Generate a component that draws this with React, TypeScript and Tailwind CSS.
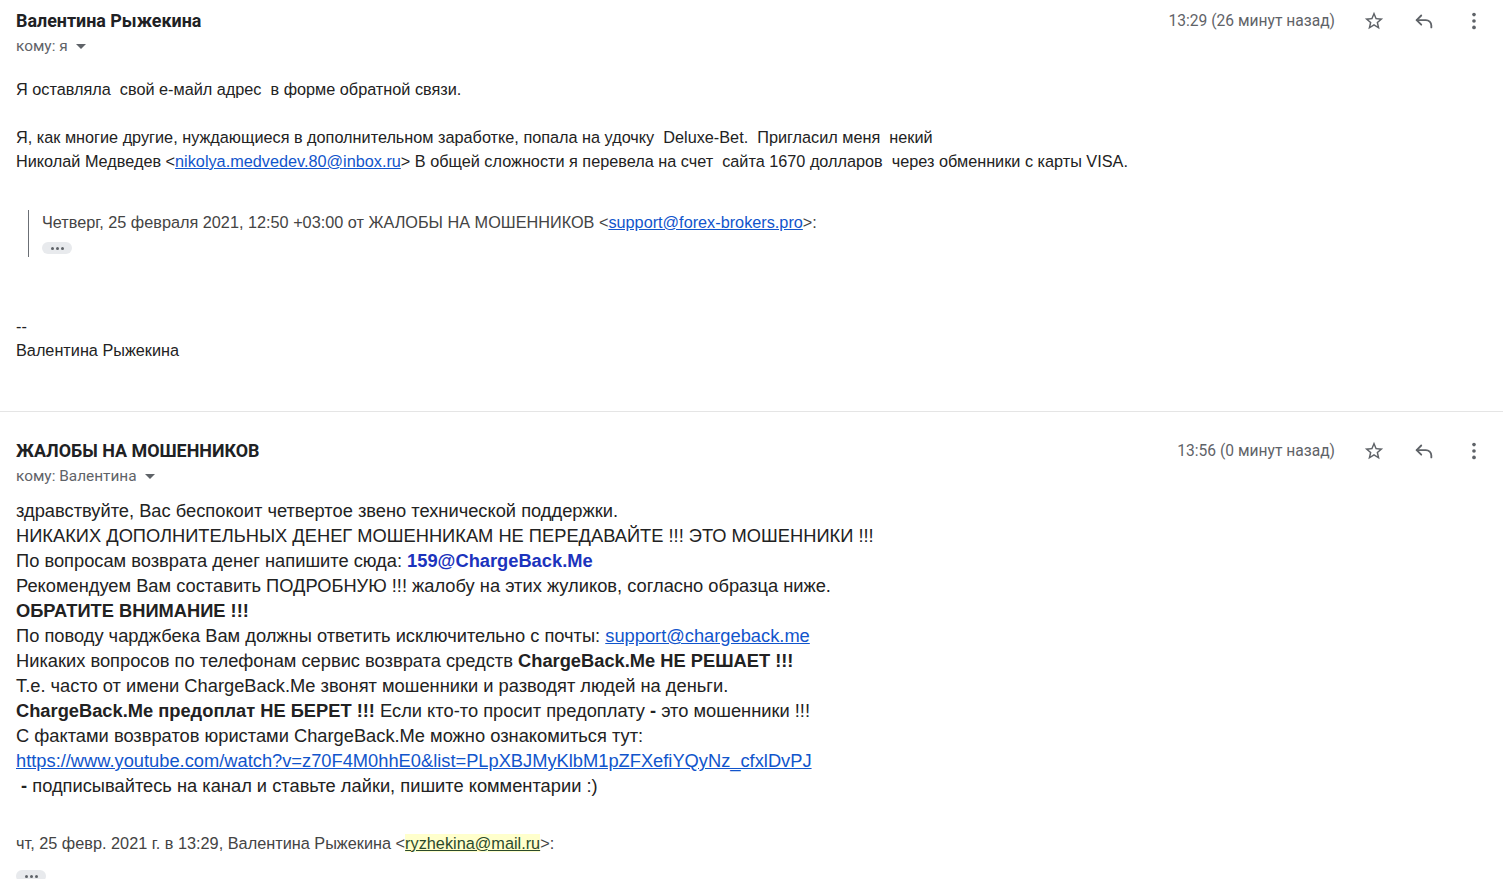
import React from 'react'

const StarIcon = () => (
  <svg width="22" height="22" viewBox="0 0 24 24" fill="#5f6368">
    <path d="M22 9.24l-7.19-.62L12 2 9.19 8.63 2 9.24l5.46 4.73L5.82 21 12 17.27 18.18 21l-1.63-7.03L22 9.24zM12 15.4l-3.76 2.27 1-4.28-3.32-2.88 4.38-.38L12 6.1l1.71 4.04 4.38.38-3.32 2.88 1 4.28L12 15.4z" />
  </svg>
)

const ReplyIcon = () => (
  <svg width="22" height="22" viewBox="0 0 24 24" fill="none" stroke="#5f6368" strokeWidth="2" strokeLinecap="round" strokeLinejoin="round">
    <path d="M9 6L4 11l5 5" />
    <path d="M4 11h10a6 6 0 0 1 6 6v2" />
  </svg>
)

const MoreIcon = () => (
  <svg width="22" height="22" viewBox="0 0 24 24" fill="#5f6368">
    <circle cx="12" cy="5" r="2" />
    <circle cx="12" cy="12" r="2" />
    <circle cx="12" cy="19" r="2" />
  </svg>
)

const Caret = () => (
  <svg width="10" height="6" viewBox="0 0 10 6" fill="#5f6368" className="ml-[8px] mt-[1px]">
    <path d="M0 0h10L5 5z" />
  </svg>
)

const Ellipsis = () => (
  <div className="flex items-center justify-center gap-[2px] w-[30px] h-[12px] rounded-full bg-[#e8eaed]">
    <span className="w-[3px] h-[3px] rounded-full bg-[#5f6368]" />
    <span className="w-[3px] h-[3px] rounded-full bg-[#5f6368]" />
    <span className="w-[3px] h-[3px] rounded-full bg-[#5f6368]" />
  </div>
)

function Header({ name, to, time }: { name: string; to: string; time: string }) {
  return (
    <div className="flex justify-between">
      <div>
        <div className="text-[17.9px] leading-[22px] font-bold text-[#202124]">{name}</div>
        <div className="mt-[4px] flex items-center text-[15.4px] leading-[20px] text-[#5f6368]">
          {to}
          <Caret />
        </div>
      </div>
      <div className="flex items-start">
        <span className="text-[15.6px] leading-[22px] text-[#5f6368] mr-[28px]">{time}</span>
        <div className="flex gap-[28px] mr-[18px]">
          <StarIcon />
          <ReplyIcon />
          <MoreIcon />
        </div>
      </div>
    </div>
  )
}

export default function App() {
  const link = 'text-[#1155cc] underline'
  const arial = { fontFamily: '"Liberation Sans", Arial, sans-serif' }
  return (
    <div className="w-[1503px] h-[879px] overflow-hidden bg-white" style={{ fontFamily: 'Roboto, "Liberation Sans", sans-serif' }}>
      {/* First message */}
      <div className="pl-[16px] pt-[10px]">
        <Header name="Валентина Рыжекина" to="кому: я" time="13:29 (26 минут назад)" />
        <div className="mt-[21px] text-[16.25px] leading-[24px] text-[#222]" style={arial}>
          <div className="whitespace-pre">Я оставляла  свой е-майл адрес  в форме обратной связи.</div>
          <div className="h-[24px]" />
          <div className="whitespace-pre">Я, как многие другие, нуждающиеся в дополнительном заработке, попала на удочку  Deluxe-Bet.  Пригласил меня  некий</div>
          <div className="whitespace-pre">
            Николай Медведев &lt;<a className={link}>nikolya.medvedev.80@inbox.ru</a>&gt; В общей сложности я перевела на счет  сайта 1670 долларов  через обменники с карты VISA.
          </div>
          <div className="mt-[37px] ml-[12px] border-l border-[#6b6f75] pl-[13px] pb-[1px] text-[#444]">
            <div>
              Четверг, 25 февраля 2021, 12:50 +03:00 от ЖАЛОБЫ НА МОШЕННИКОВ &lt;<a className={link}>support@forex-brokers.pro</a>&gt;:
            </div>
            <div className="pt-[8px] pb-[2px]">
              <Ellipsis />
            </div>
          </div>
          <div className="mt-[57px]">--</div>
          <div>Валентина Рыжекина</div>
        </div>
      </div>

      <div className="mt-[49px] border-t border-[#e5e5e5]" />

      {/* Second message */}
      <div className="pl-[16px] pt-[28px]">
        <Header name="ЖАЛОБЫ НА МОШЕННИКОВ" to="кому: Валентина" time="13:56 (0 минут назад)" />
        <div className="mt-[12px] text-[18.3px] leading-[25px] text-[#222]" style={arial}>
          <div>здравствуйте, Вас беспокоит четвертое звено технической поддержки.</div>
          <div>НИКАКИХ ДОПОЛНИТЕЛЬНЫХ ДЕНЕГ МОШЕННИКАМ НЕ ПЕРЕДАВАЙТЕ !!! ЭТО МОШЕННИКИ !!!</div>
          <div>
            По вопросам возврата денег напишите сюда: <b className="text-[#1c33bd]">159@ChargeBack.Me</b>
          </div>
          <div>Рекомендуем Вам составить ПОДРОБНУЮ !!! жалобу на этих жуликов, согласно образца ниже.</div>
          <div className="font-bold">ОБРАТИТЕ ВНИМАНИЕ !!!</div>
          <div>
            По поводу чарджбека Вам должны ответить исключительно с почты: <a className={link}>support@chargeback.me</a>
          </div>
          <div>
            Никаких вопросов по телефонам сервис возврата средств <b>ChargeBack.Me НЕ РЕШАЕТ !!!</b>
          </div>
          <div>Т.е. часто от имени ChargeBack.Me звонят мошенники и разводят людей на деньги.</div>
          <div>
            <b>ChargeBack.Me предоплат НЕ БЕРЕТ !!!</b> Если кто-то просит предоплату <b>-</b> это мошенники !!!
          </div>
          <div>С фактами возвратов юристами ChargeBack.Me можно ознакомиться тут:</div>
          <div>
            <a className={link}>https://www.youtube.com/watch?v=z70F4M0hhE0&amp;list=PLpXBJMyKlbM1pZFXefiYQyNz_cfxlDvPJ</a>
          </div>
          <div className="whitespace-pre"> <b>-</b> подписывайтесь на канал и ставьте лайки, пишите комментарии :)</div>
        </div>
        <div className="mt-[33px] text-[16.3px] leading-[24px] text-[#444]" style={arial}>
          <div>
            чт, 25 февр. 2021 г. в 13:29, Валентина Рыжекина &lt;<a className="underline text-[#2b4a2b] bg-[#ffffcc]">ryzhekina@mail.ru</a>&gt;:
          </div>
          <div className="pt-[15px]">
            <Ellipsis />
          </div>
        </div>
      </div>
    </div>
  )
}
